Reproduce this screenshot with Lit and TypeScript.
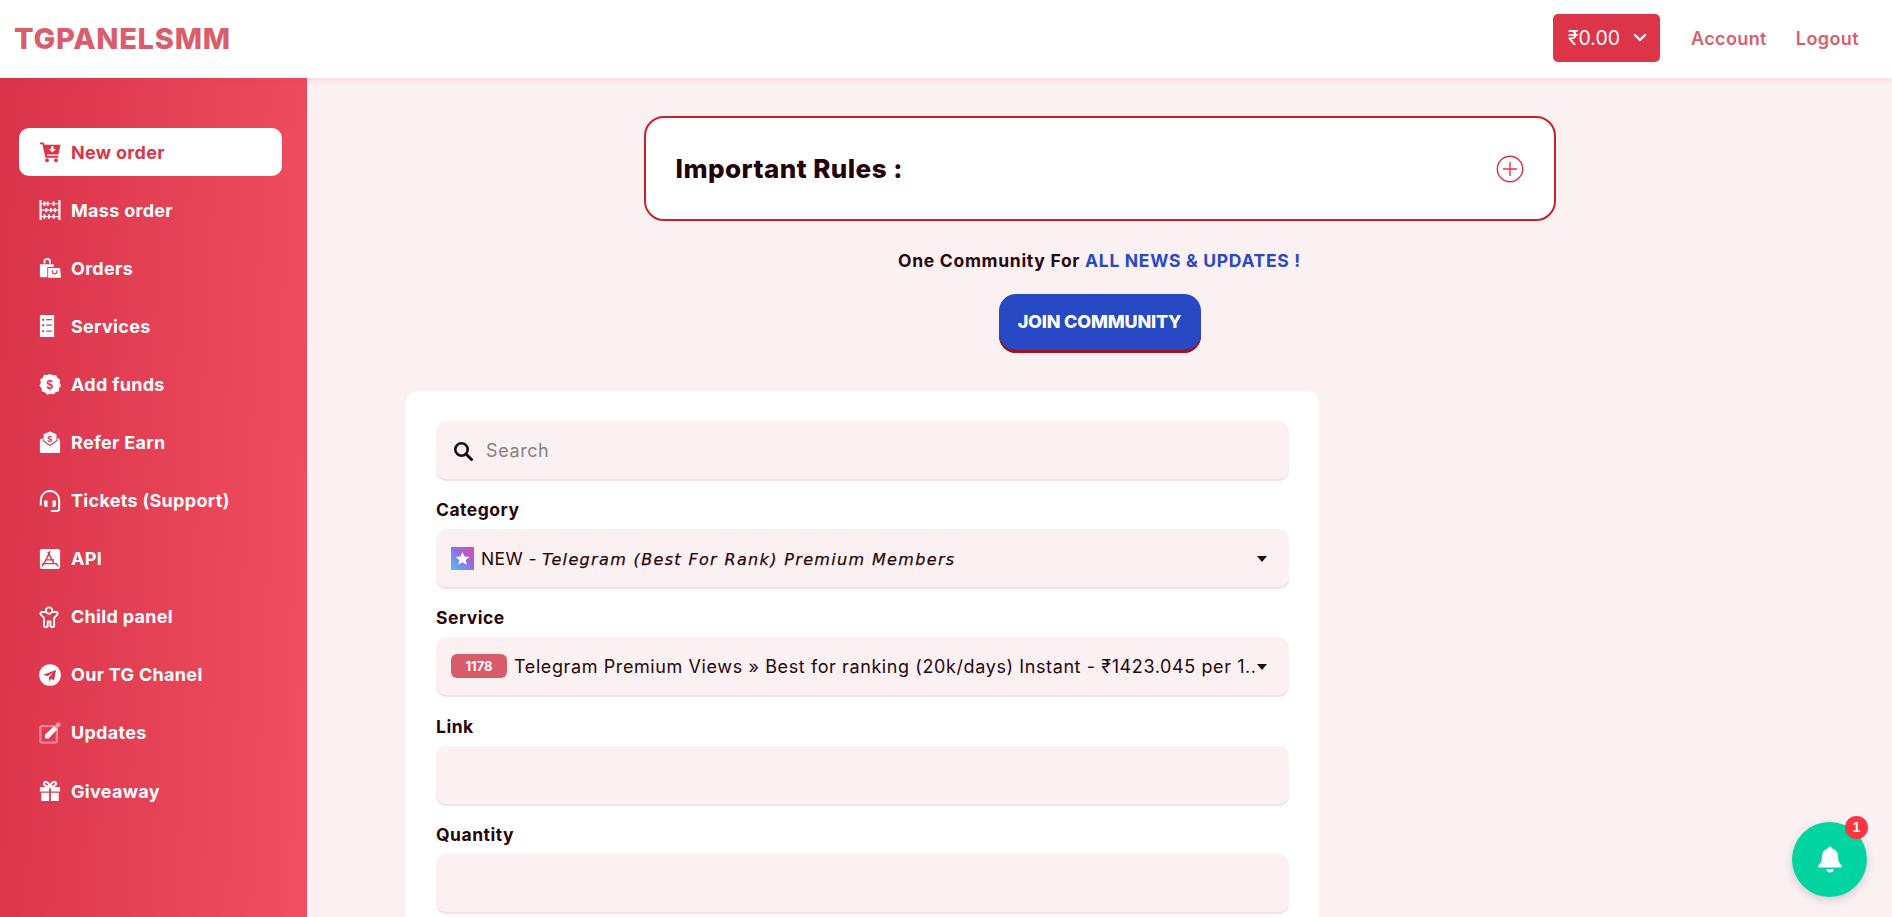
import { LitElement, html, css, svg } from "lit";
import { customElement } from "lit/decorators.js";

const R = "#dc3449";
const icons: Record<string, unknown> = {
  cart: svg`<path fill="currentColor" d="M1 1.5h4.2l.7 2.5H23.5l-2.3 10.6H8.4l.4 1.6H21v2.1H7.1L3.7 3.6H1z"/><circle fill="currentColor" cx="8.8" cy="21" r="2.1"/><circle fill="currentColor" cx="18.6" cy="21" r="2.1"/><path fill="#fff" d="M13.3 5.8h2.6v3h2.6l-3.9 3.800-3.900-3.800h2.600z"/>`,
  abacus: svg`<path fill="currentColor" d="M.5 1h2.400v22H.5zM21.100 1h2.400v22h-2.400zM3 4.500h18v1.300H3zM3 11.500h18v1.300H3zM3 18.500h18v1.300H3z"/><path fill="currentColor" d="M5 2.800h2v4.800H5zM8.500 2.800h2v4.800h-2zM15 2.800h2v4.800h-2zM7 9.700h2v4.800H7zM12 9.700h2v4.800h-2zM16.500 9.700h2v4.800h-2zM5 16.700h2v4.800H5zM10 16.700h2v4.800h-2zM15 16.700h2v4.800h-2z"/>`,
  bag: svg`<path fill="currentColor" fill-rule="evenodd" d="M5 7V5a4 4 0 0 1 8 0v2h-2V5a2 2 0 0 0-4 0v2zM1 8h15v3H9v11H2a1 1 0 0 1-1-1z"/><path fill="currentColor" fill-rule="evenodd" d="M10 12h13l1 10.500H10zM14 14.500v1.500a3 3 0 0 0 6 0v-1.500h-1.200V16a1.800 1.800 0 0 1-3.600 0v-1.500z"/>`,
  list: svg`<path fill="currentColor" fill-rule="evenodd" d="M1 0h15.500v24H1zM3.500 4v2.200h2.200V4zM8 4.400v1.400h6V4.400zM3.500 10v2.200h2.200V10zM8 10.400v1.400h6v-1.400zM3.500 16.500v2.200h2.200v-2.200zM8 16.900v1.400h6v-1.400z"/>`,
  funds: svg`<path fill="currentColor" d="M12 1l3 1.500 3.500-.2 1.500 3 3 2-.6 3.400L24 13.500l-2 2.800-.3 3.500-3.300 1-2.400 2.500-3.500-.7-3.400 1.100-2.400-2.500-3.500-1L2.800 16.600.5 13.700 2 10.500 1.200 7.200 4.200 5.300 5.500 2 9 2.300z"/><text x="12" y="17.500" text-anchor="middle" font-family="Liberation Sans" font-weight="700" font-size="13" fill="${R}">$</text>`,
  refer: svg`<path fill="currentColor" d="M5 10V3.500L12 .5l7 3V10l-7 5zM1 9.500l3-2V11l8 5.500L20 11V7.500l3 2V23a1 1 0 0 1-1 1H2a1 1 0 0 1-1-1z"/><text x="12" y="11.500" text-anchor="middle" font-family="Liberation Sans" font-weight="700" font-size="10" fill="${R}">$</text>`,
  headset: svg`<path fill="none" stroke="currentColor" stroke-width="2.200" d="M2 17v-6a10 10 0 0 1 20 0v9.500a2.500 2.500 0 0 1-2.500 2.500H13"/><path fill="currentColor" d="M5.500 11.500h3.800v7H7.500a2 2 0 0 1-2-2zM18.500 11.500h-3.800v7h1.800a2 2 0 0 0 2-2z"/>`,
  api: svg`<rect fill="currentColor" x="1" y="1" width="22" height="22" rx="2.500"/><path fill="none" stroke="${R}" stroke-width="1.500" stroke-linecap="round" d="M12 4l-6.500 13M10 5l6.500 12M4 17h15M8 13h8M3.500 19.500l2-2.500M20.500 19.500l-2-2.500"/>`,
  child: svg`<g fill="none" stroke="currentColor" stroke-width="2.100"><circle cx="11" cy="5" r="3.500"/><path d="M7.500 6.500H3.500C2 6.500 1 8 2 9.500L5.500 13v8.500c0 1.800 4 1.800 4 0V17h3v4.500c0 1.800 4 1.800 4 0V13L20 9.500c1-1.500 0-3-1.500-3h-4"/></g>`,
  tg: svg`<circle fill="currentColor" cx="12" cy="12" r="11.800"/><path fill="${R}" d="M18.500 6.500 4.800 11.700l4.400 1.700 6.300-4-4.700 5 .2 4.300 2.400-2.700 3 2.100z"/>`,
  edit: svg`<rect x="1.500" y="4.500" width="18" height="18" rx="2" fill="none" stroke="currentColor" stroke-opacity=".38" stroke-width="2.600"/><path fill="currentColor" d="M16.500 4.500 20 8 10.500 18H6.500v-4z"/><circle cx="21" cy="3" r="2.600" fill="currentColor" fill-opacity=".45"/>`,
  gift: svg`<path fill="currentColor" d="M1 7.500h10v5H1zM13 7.500h10v5H13zM2.500 14H11v9H2.500zM13 14h8.500v9H13z"/><path fill="none" stroke="currentColor" stroke-width="2.200" d="M12 7C9 7 5.500 6.600 5.500 4c0-3.200 4.500-3 6.500 3 2-6 6.500-6.200 6.500-3 0 2.600-3.500 3-6.500 3z"/>`,
};

const menu = [
  ["cart", "New order"],
  ["abacus", "Mass order"],
  ["bag", "Orders"],
  ["list", "Services"],
  ["funds", "Add funds"],
  ["refer", "Refer Earn"],
  ["headset", "Tickets (Support)"],
  ["api", "API"],
  ["child", "Child panel"],
  ["tg", "Our TG Chanel"],
  ["edit", "Updates"],
  ["gift", "Giveaway"],
];

@customElement("app-root")
export class AppRoot extends LitElement {
  static styles = css`
    :host {
      display: flex;
      flex-direction: column;
      height: 100vh;
      overflow: hidden;
      background: #fbf0f2;
      color: #28060b;
      font-family: "Inter", "Noto Sans", "DejaVu Sans", sans-serif;
    }
    * { box-sizing: border-box; }
    .nav {
      height: 78px;
      flex: none;
      background: #fff;
      display: flex;
      align-items: center;
      padding: 0 33px 2px 14px;
      box-shadow: 0 2px 6px rgba(220, 60, 80, .14);
      position: relative;
      z-index: 2;
    }
    .logo {
      font-size: 29px;
      font-weight: 800;
      color: #da5d6c;
      letter-spacing: .75px;
      margin-right: auto;
    }
    .balance {
      width: 107px;
      height: 48px;
      background: #dc3449;
      border-radius: 5px;
      color: #fff;
      font-size: 19.5px;
      display: flex;
      align-items: center;
      padding-left: 15px;
      gap: 13px;
      margin-right: 31px;
    }
    .navlink {
      font-size: 18px;
      font-weight: 600;
      letter-spacing: .4px;
      color: #da5d6c;
    }
    .navlink + .navlink { margin-left: 29px; }
    .body { flex: 1; display: flex; min-height: 0; }
    .side {
      width: 307px;
      flex: none;
      background: linear-gradient(93deg, #d93349, #f14f62);
      padding: 50px 25px 0 19px;
      display: flex;
      flex-direction: column;
      gap: 10.1px;
    }
    .item {
      height: 48px;
      flex: none;
      border-radius: 10px;
      display: flex;
      align-items: center;
      padding-left: 20px;
      color: #fff;
      font-size: 18px;
      font-weight: 700;
      letter-spacing: .3px;
    }
    .item.on { background: #fff; color: #dc3449; }
    .item svg { width: 22px; height: 22px; margin-right: 10px; flex: none; }
    .main {
      flex: 1;
      min-width: 0;
      display: flex;
      flex-direction: column;
      padding-top: 38px;
    }
    .rules {
      width: 912px;
      height: 105px;
      flex: none;
      align-self: center;
      background: #fff;
      border: 2px solid #c32428;
      border-radius: 20px;
      display: flex;
      align-items: center;
      justify-content: space-between;
      padding: 0 30px;
      font-size: 26px;
      font-weight: 800;
      letter-spacing: .45px;
      color: #22040a;
    }
    .rules svg { width: 28px; height: 28px; }
    .community {
      align-self: center;
      margin-top: 29px;
      height: 22px;
      line-height: 22px;
      font-size: 17.5px;
      font-weight: 700;
      letter-spacing: .7px;
      flex: none;
    }
    .community b { color: #2849c4; font-weight: 700; }
    .join {
      align-self: center;
      margin-top: 22px;
      width: 202px;
      height: 59px;
      flex: none;
      border: 0;
      border-radius: 17px;
      background: #2849c4;
      box-shadow: inset 0 -3px 0 #9c1520;
      color: #fff;
      font: 800 18px "Inter", sans-serif;
      letter-spacing: -.2px;
      padding: 0 0 5px;
    }
    .card {
      margin: 38px 0 0 99px;
      width: 913px;
      flex: none;
      background: #fff;
      border-radius: 12px;
      padding: 30px;
    }
    .field {
      height: 60px;
      background: #fbf0f2;
      border-radius: 10px;
      box-shadow: inset 0 -2px 0 #f6e0e3;
      display: flex;
      align-items: center;
      padding: 0 15px 2px;
      font-size: 18px;
      letter-spacing: .6px;
      position: relative;
    }
    .field input {
      flex: 1;
      min-width: 0;
      border: 0;
      outline: 0;
      background: none;
      font: inherit;
      letter-spacing: inherit;
      color: inherit;
      padding: 0;
    }
    .field input::placeholder { color: #8b7d80; }
    .search svg { width: 20px; height: 20px; margin: 2px 13px 0 2px; flex: none; }
    label {
      display: block;
      font-size: 17.5px;
      font-weight: 700;
      letter-spacing: .5px;
      height: 22px;
      line-height: 22px;
      margin: 18.2px 0 8px;
    }
    .star { width: 23px; height: 23px; margin-right: 7px; flex: none; }
    .cat { font-size: 17.5px; letter-spacing: .4px; }
    .cat i {
      font-family: "DejaVu Sans", sans-serif;
      font-style: italic;
      font-weight: 500;
      font-size: 16px;
      letter-spacing: 1.35px;
      -webkit-text-stroke: .25px currentColor;
    }
    .caret {
      position: absolute;
      right: 22px;
      top: 50%;
      margin-top: -3px;
      width: 0;
      height: 0;
      border: 5px solid transparent;
      border-top: 6px solid #28060b;
      border-bottom: 0;
    }
    .badge {
      width: 56px;
      height: 24px;
      flex: none;
      border-radius: 6px;
      background: #d85b6a;
      color: #fff;
      font-size: 13px;
      font-weight: 700;
      letter-spacing: 0;
      display: flex;
      align-items: center;
      justify-content: center;
      margin-right: 7px;
    }
    .svc { white-space: nowrap; }
    .fab {
      position: fixed;
      left: 1792px;
      top: 821.5px;
      width: 75px;
      height: 75px;
      border-radius: 50%;
      background: #00d5a2;
      box-shadow: 0 3px 10px rgba(0, 0, 0, .16);
      display: flex;
      align-items: center;
      justify-content: center;
    }
    .fab svg { width: 26px; height: 28px; }
    .count {
      position: absolute;
      left: 53px;
      top: -6px;
      width: 23px;
      height: 23px;
      border-radius: 50%;
      background: #fb3640;
      color: #fff;
      font: 700 14px "Liberation Sans", sans-serif;
      display: flex;
      align-items: center;
      justify-content: center;
    }
  `;

  render() {
    return html`
      <div class="nav">
        <div class="logo">TGPANELSMM</div>
        <div class="balance">₹0.00
          <svg width="14" height="10" viewBox="0 0 14 10"><path d="M2 2l5 5 5-5" fill="none" stroke="#fff" stroke-width="2.4" stroke-linecap="round" stroke-linejoin="round"/></svg>
        </div>
        <div class="navlink">Account</div>
        <div class="navlink">Logout</div>
      </div>
      <div class="body">
        <div class="side">
          ${menu.map(
            ([ic, t], i) => html`<div class="item ${i === 0 ? "on" : ""}">
              <svg viewBox="0 0 24 24">${icons[ic]}</svg>${t}
            </div>`
          )}
        </div>
        <div class="main">
          <div class="rules">
            <span>Important Rules :</span>
            <svg viewBox="0 0 28 28"><circle cx="14" cy="14" r="12.7" fill="none" stroke="#d8324a" stroke-width="1.4"/><path d="M14 7v14M7 14h14" stroke="#ee2f45" stroke-width="1.4"/></svg>
          </div>
          <div class="community">One Community For <b>ALL NEWS &amp; UPDATES !</b></div>
          <button class="join">JOIN COMMUNITY</button>
          <div class="card">
            <div class="field search">
              <svg viewBox="0 0 20 20"><circle cx="8.5" cy="8.5" r="6.2" fill="none" stroke="#1d0a0c" stroke-width="2.6"/><path d="M13 13l5.500 5.500" stroke="#1d0a0c" stroke-width="3" stroke-linecap="round"/></svg>
              <input placeholder="Search" />
            </div>
            <label>Category</label>
            <div class="field cat">
              <svg class="star" viewBox="0 0 23 23">
                <defs><linearGradient id="st" x1="0" y1="1" x2="1" y2="0"><stop offset="0" stop-color="#4fc3f0"/><stop offset=".55" stop-color="#8f6ee0"/><stop offset="1" stop-color="#e8489a"/></linearGradient></defs>
                <rect width="23" height="23" fill="url(#st)"/>
                <path fill="#fff" d="M11.500 5l2 4.500 4.800.4-3.600 3.200 1.100 4.700-4.300-2.500-4.300 2.500 1.100-4.700-3.600-3.200 4.800-.4z"/>
              </svg>
              <span>NEW - <i>Telegram (Best For Rank) Premium Members</i></span>
              <span class="caret"></span>
            </div>
            <label>Service</label>
            <div class="field">
              <span class="badge">1178</span>
              <span class="svc">Telegram Premium Views » Best for ranking (20k/days) Instant - ₹1423.045 per 1..</span>
              <span class="caret"></span>
            </div>
            <label>Link</label>
            <div class="field"><input /></div>
            <label>Quantity</label>
            <div class="field"><input /></div>
          </div>
        </div>
      </div>
      <div class="fab">
        <svg viewBox="0 0 26 28"><path fill="#fff" d="M13 1.500c1.300 0 2 .9 2.100 2 3.900 1 6 4.200 6 8.300 0 4.400 1.200 6.500 3.500 8.700.8.800.3 2-.8 2H2.200c-1.100 0-1.600-1.200-.8-2 2.300-2.200 3.500-4.300 3.500-8.700 0-4.100 2.100-7.300 6-8.300.1-1.100.8-2 2.100-2z"/><path fill="#fff" d="M9.500 24h7a3.500 3.500 0 0 1-7 0z"/></svg>
        <span class="count">1</span>
      </div>
    `;
  }
}
